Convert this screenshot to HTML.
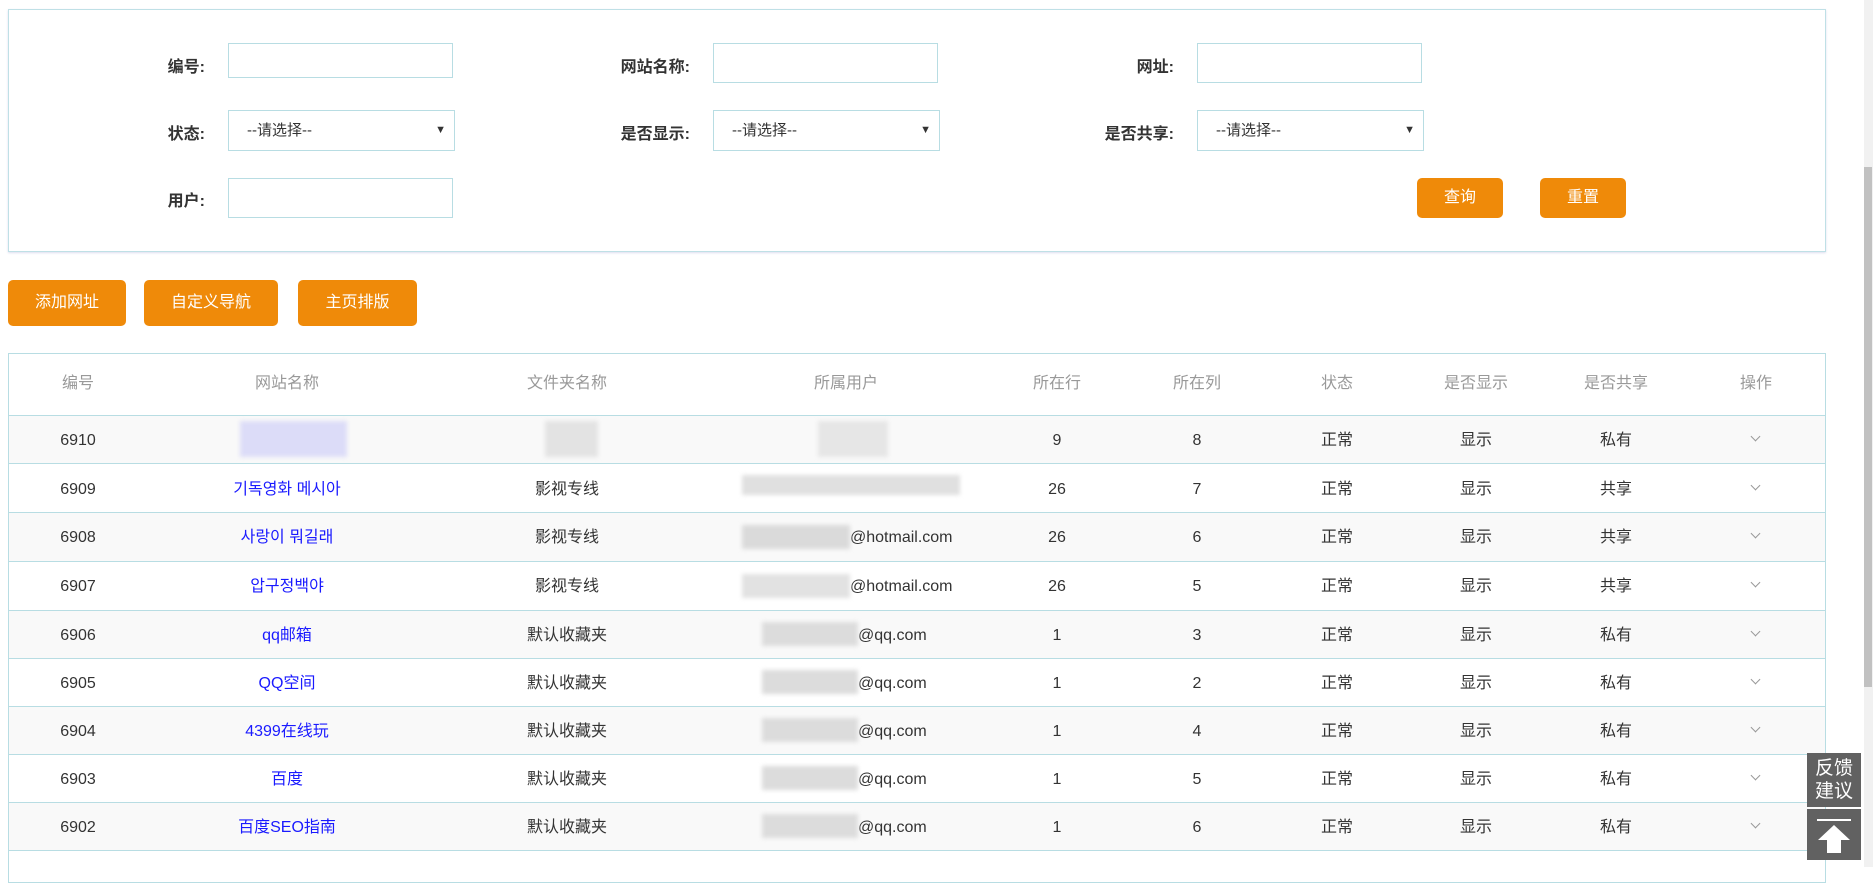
<!DOCTYPE html>
<html><head><meta charset="utf-8"><style>
*{margin:0;padding:0;box-sizing:border-box}
body{width:1873px;height:867px;overflow:hidden;background:#fff;font-family:"Liberation Sans","Noto Sans CJK SC",sans-serif;position:relative;color:#333}
.a{position:absolute}
.form{left:8px;top:9px;width:1818px;height:243px;border:1px solid #bfe0e6;box-shadow:0 1px 2px #dde}
.lbl{position:absolute;font-size:16px;font-weight:bold;color:#333;text-align:right;width:120px;line-height:20px}
.inp{position:absolute;border:1px solid #b8dde3;background:#fff}
.sel{position:absolute;border:1px solid #b8dde3;background:#fff;font-size:15px;padding-left:18px;line-height:39px;color:#333}
.sel:after{content:"▼";position:absolute;right:8px;top:0px;font-size:11px}
.btn{position:absolute;background:#ef8a09;color:#fff;border-radius:5px;font-size:16px;text-align:center}
.tbl{left:8px;top:353px;width:1818px;height:530px;border:1px solid #b8dde3}
.th{position:absolute;top:353px;height:62px;line-height:62px;font-size:16px;color:#999;text-align:center;width:160px}
.row{position:absolute;left:9px;width:1816px;border-top:1px solid #b8dde3}
.c{position:absolute;width:200px;text-align:center;font-size:16px;line-height:48px;color:#333}
.lk{color:#1a1aff}
.blur{position:absolute;filter:blur(2px)}
.chev{position:absolute;width:7px;height:7px;border-right:1px solid #999;border-bottom:1px solid #999;transform:rotate(45deg)}
</style></head><body>
<div class="a form"></div>
<div class="lbl" style="left:85px;top:58px">编号:</div>
<div class="inp" style="left:228px;top:43px;width:225px;height:35px"></div>
<div class="lbl" style="left:570px;top:58px">网站名称:</div>
<div class="inp" style="left:713px;top:43px;width:225px;height:40px"></div>
<div class="lbl" style="left:1054px;top:58px">网址:</div>
<div class="inp" style="left:1197px;top:43px;width:225px;height:40px"></div>
<div class="lbl" style="left:85px;top:125px">状态:</div>
<div class="sel" style="left:228px;top:110px;width:227px;height:41px">--请选择--</div>
<div class="lbl" style="left:570px;top:125px">是否显示:</div>
<div class="sel" style="left:713px;top:110px;width:227px;height:41px">--请选择--</div>
<div class="lbl" style="left:1054px;top:125px">是否共享:</div>
<div class="sel" style="left:1197px;top:110px;width:227px;height:41px">--请选择--</div>
<div class="lbl" style="left:85px;top:192px">用户:</div>
<div class="inp" style="left:228px;top:178px;width:225px;height:40px"></div>
<div class="btn" style="left:1417px;top:178px;width:86px;height:40px;line-height:40px">查询</div>
<div class="btn" style="left:1540px;top:178px;width:86px;height:40px;line-height:40px">重置</div>

<div class="btn" style="left:8px;top:280px;width:118px;height:46px;line-height:46px">添加网址</div>
<div class="btn" style="left:144px;top:280px;width:134px;height:46px;line-height:46px">自定义导航</div>
<div class="btn" style="left:298px;top:280px;width:119px;height:46px;line-height:46px">主页排版</div>

<div class="a tbl"></div>
<div class="th" style="left:-2px">编号</div>
<div class="th" style="left:207px">网站名称</div>
<div class="th" style="left:487px">文件夹名称</div>
<div class="th" style="left:766px">所属用户</div>
<div class="th" style="left:977px">所在行</div>
<div class="th" style="left:1117px">所在列</div>
<div class="th" style="left:1257px">状态</div>
<div class="th" style="left:1396px">是否显示</div>
<div class="th" style="left:1536px">是否共享</div>
<div class="th" style="left:1676px">操作</div>

<div class="row" style="top:415px;height:49px;background:#f9f9f9"></div>
<div class="row" style="top:463px;height:49px;background:#fff"></div>
<div class="row" style="top:512px;height:49px;background:#f9f9f9"></div>
<div class="row" style="top:561px;height:49px;background:#fff"></div>
<div class="row" style="top:610px;height:48px;background:#f9f9f9"></div>
<div class="row" style="top:658px;height:48px;background:#fff"></div>
<div class="row" style="top:706px;height:48px;background:#f9f9f9"></div>
<div class="row" style="top:754px;height:48px;background:#fff"></div>
<div class="row" style="top:802px;height:48px;background:#f9f9f9"></div>
<div class="row" style="top:850px;height:20px;background:#fff"></div>

<div id="rows"></div>
<div class="blur" style="left:240px;top:421px;width:107px;height:36px;background:#dcdcf8"></div>
<div class="blur" style="left:545px;top:421px;width:53px;height:36px;background:#e3e3e3"></div>
<div class="blur" style="left:818px;top:421px;width:70px;height:36px;background:#e6e6e6"></div>
<div class="blur" style="left:742px;top:475px;width:218px;height:20px;background:#e0e0e0"></div>
<div class="blur" style="left:742px;top:525px;width:108px;height:24px;background:#dadada"></div>
<div class="blur" style="left:742px;top:574px;width:108px;height:24px;background:#e2e2e2"></div>
<div class="blur" style="left:762px;top:622px;width:96px;height:24px;background:#dcdcdc"></div>
<div class="blur" style="left:762px;top:670px;width:96px;height:24px;background:#dcdcdc"></div>
<div class="blur" style="left:762px;top:718px;width:96px;height:24px;background:#dcdcdc"></div>
<div class="blur" style="left:762px;top:766px;width:96px;height:24px;background:#dcdcdc"></div>
<div class="blur" style="left:762px;top:814px;width:96px;height:24px;background:#dcdcdc"></div>

<script>
var d=[["6910","","","","9","8","正常","显示","私有"],
["6909","기독영화 메시아","影视专线","","26","7","正常","显示","共享"],
["6908","사랑이 뭐길래","影视专线","@hotmail.com","26","6","正常","显示","共享"],
["6907","압구정백야","影视专线","@hotmail.com","26","5","正常","显示","共享"],
["6906","qq邮箱","默认收藏夹","@qq.com","1","3","正常","显示","私有"],
["6905","QQ空间","默认收藏夹","@qq.com","1","2","正常","显示","私有"],
["6904","4399在线玩","默认收藏夹","@qq.com","1","4","正常","显示","私有"],
["6903","百度","默认收藏夹","@qq.com","1","5","正常","显示","私有"],
["6902","百度SEO指南","默认收藏夹","@qq.com","1","6","正常","显示","私有"]];
var tops=[417,465.5,514,563,611.5,660,708,756,804];
var cx=[78,287,567,0,1057,1197,1337,1476,1616];
var h="";
d.forEach(function(r,i){var t=tops[i];
r.forEach(function(v,j){if(j==3){if(v)h+='<div class="c" style="left:'+(v.indexOf("hot")>0?850:858)+'px;top:'+t+'px;width:auto;text-align:left">'+v+'</div>';return;}
h+='<div class="c'+(j==1?' lk':'')+'" style="left:'+(cx[j]-100)+'px;top:'+t+'px">'+v+'</div>';});
h+='<div class="chev" style="left:1752px;top:'+(t+16)+'px"></div>';});
document.getElementById("rows").innerHTML=h;
</script>

<div class="a" style="left:1864px;top:0;width:9px;height:867px;background:#f1f1f1"></div>
<div class="a" style="left:1864px;top:167px;width:8px;height:520px;background:#c1c1c1"></div>
<div class="a" style="left:1807px;top:753px;width:54px;height:54px;background:#616161;color:#fff;font-size:19px;line-height:23px;text-align:center;padding-top:4px">反馈<br>建议</div>
<div class="a" style="left:1807px;top:809px;width:54px;height:51px;background:#616161">
<svg width="54" height="51" viewBox="0 0 54 51"><rect x="10" y="10" width="34" height="2" fill="#fff"/><path d="M27 16 L43 31 L34 31 L34 44 L20 44 L20 31 L11 31 Z" fill="#fff"/></svg></div>
</body></html>
